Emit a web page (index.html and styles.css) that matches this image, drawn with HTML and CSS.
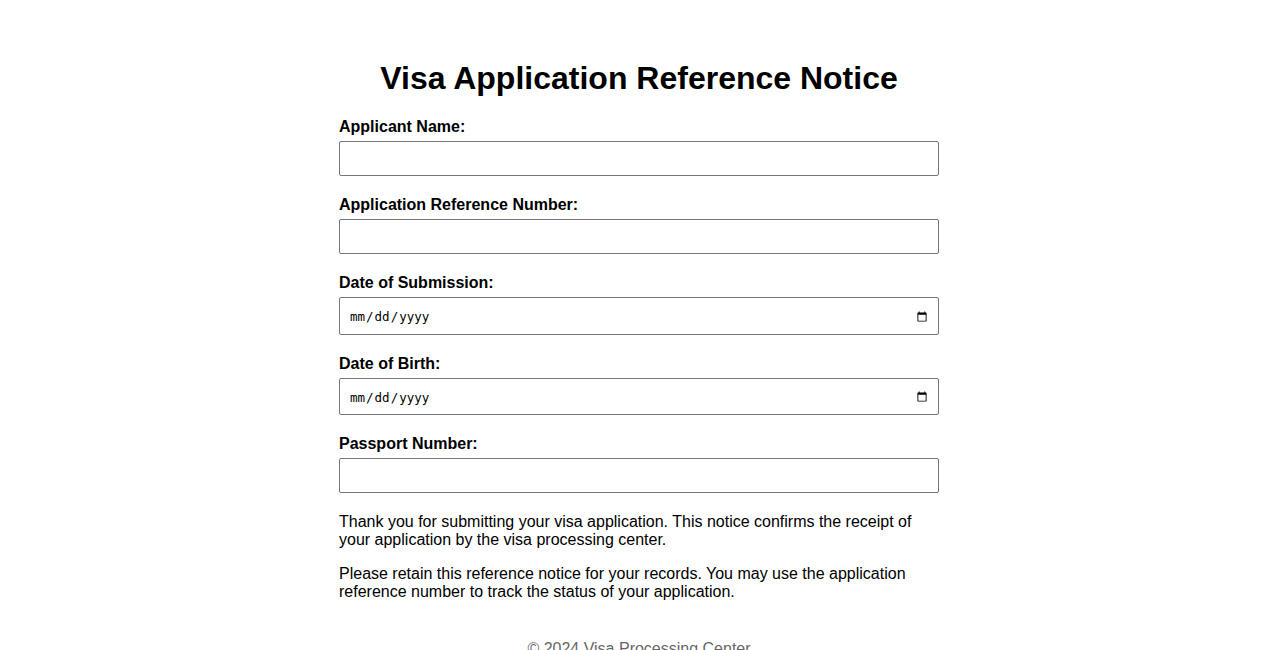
FILE: index.html
```html
<!DOCTYPE html>
<html lang="en">
<head>
<meta charset="utf-8">
<title>Visa Application Reference Notice</title>
<link rel="stylesheet" href="styles.css">
</head>
<body>
<div class="container">
  <h1 class="title">Visa Application Reference Notice</h1>
  <form class="form">
    <div class="field">
      <label class="label" for="name">Applicant Name:</label>
      <input class="input" type="text" id="name">
    </div>
    <div class="field">
      <label class="label" for="ref">Application Reference Number:</label>
      <input class="input" type="text" id="ref">
    </div>
    <div class="field">
      <label class="label" for="sub">Date of Submission:</label>
      <input class="input input-date" type="date" id="sub">
    </div>
    <div class="field">
      <label class="label" for="dob">Date of Birth:</label>
      <input class="input input-date" type="date" id="dob">
    </div>
    <div class="field">
      <label class="label" for="pass">Passport Number:</label>
      <input class="input" type="text" id="pass">
    </div>
  </form>
  <p class="text">Thank you for submitting your visa application. This notice confirms the receipt of your application by the visa processing center.</p>
  <p class="text">Please retain this reference notice for your records. You may use the application reference number to track the status of your application.</p>
  <footer class="footer">© 2024 Visa Processing Center</footer>
</div>
</body>
</html>
```
FILE: styles.css
```css
html, body {
  margin: 0;
  padding: 0;
  background: #fff;
}
body {
  font-family: "Liberation Sans", Arial, sans-serif;
  color: #000;
}
.container {
  width: 600px;
  margin: 0 auto;
  padding-top: 39px;
}
.title {
  font-size: 32px;
  font-weight: bold;
  text-align: center;
  margin: 21px 0 21px;
}
.form {
  display: flex;
  flex-direction: column;
  gap: 20px;
}
.field {
  display: flex;
  flex-direction: column;
  gap: 5px;
}
.label {
  font-size: 16px;
  font-weight: bold;
  line-height: 18px;
}
.input {
  box-sizing: border-box;
  width: 100%;
  height: 35px;
  padding: 8px 8px 8px 9px;
  border: 1px solid #767676;
  border-radius: 2px;
  font-size: 14px;
  margin: 0;
}
.input-date {
  height: 37.5px;
  padding-top: 9px;
  padding-bottom: 7px;
  font-family: "DejaVu Sans Mono", monospace;
  font-size: 12.5px;
}
.text {
  font-size: 16px;
  line-height: 18px;
  margin: 16px 0;
}
.form + .text {
  margin-top: 20px;
}
.footer {
  margin-top: 39px;
  text-align: center;
  color: #666;
  font-size: 16px;
  line-height: 18px;
}
```
